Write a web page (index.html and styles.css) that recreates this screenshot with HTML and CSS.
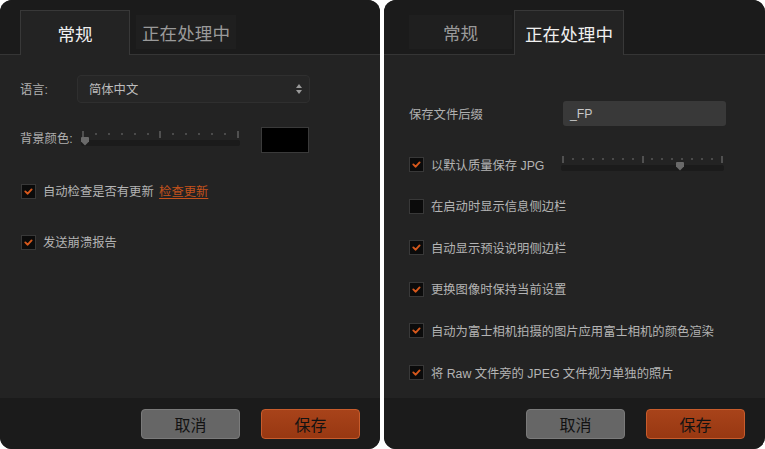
FILE: index.html
```html
<!DOCTYPE html>
<html lang="zh">
<head>
<meta charset="utf-8">
<title>偏好设置</title>
<link rel="stylesheet" href="styles.css">
</head>
<body>
<div class="panel left">
  <div class="tabs">
    <div class="tab active">常规</div>
    <div class="tab inactive">正在处理中</div>
  </div>
  <div class="content">
    <div class="row lang-row">
      <span class="label">语言:</span>
      <div class="select">简体中文<span class="arrows"><i class="up"></i><i class="down"></i></span></div>
    </div>
    <div class="row bg-row">
      <span class="label">背景颜色:</span>
      <div class="slider s13">
        <div class="ticks">
          <i class="big"></i><i></i><i></i><i></i><i></i><i></i><i class="big"></i><i></i><i></i><i></i><i></i><i></i><i class="big"></i>
        </div>
        <div class="track"><span class="thumb" style="left:0px"></span></div>
      </div>
      <div class="swatch"></div>
    </div>
    <div class="row check-row upd">
      <span class="cb on"><svg viewBox="0 0 15 15"><path d="M4.3 7.4 L6.7 9.7 L10.6 5.4"/></svg></span>
      <span class="text">自动检查是否有更新 <a class="link">检查更新</a></span>
    </div>
    <div class="row check-row crash">
      <span class="cb on"><svg viewBox="0 0 15 15"><path d="M4.3 7.4 L6.7 9.7 L10.6 5.4"/></svg></span>
      <span class="text">发送崩溃报告</span>
    </div>
  </div>
  <div class="footer">
    <button class="btn cancel">取消</button>
    <button class="btn save">保存</button>
  </div>
</div>

<div class="panel right">
  <div class="tabs">
    <div class="tab inactive">常规</div>
    <div class="tab active">正在处理中</div>
  </div>
  <div class="content">
    <div class="list">
      <div class="row suffix-row">
        <span class="label">保存文件后缀</span>
        <div class="input">_FP</div>
      </div>
      <div class="row check-row jpg">
        <div class="jpg-label">
          <span class="cb on"><svg viewBox="0 0 15 15"><path d="M4.3 7.4 L6.7 9.7 L10.6 5.4"/></svg></span>
          <span class="text">以默认质量保存 JPG</span>
        </div>
        <div class="slider s17">
          <div class="ticks">
            <i class="big"></i><i></i><i></i><i></i><i></i><i></i><i></i><i></i><i class="big"></i><i></i><i></i><i></i><i></i><i></i><i></i><i></i><i class="big"></i>
          </div>
          <div class="track"><span class="thumb" style="left:115px"></span></div>
        </div>
      </div>
      <div class="row check-row">
        <span class="cb"></span>
        <span class="text">在启动时显示信息侧边栏</span>
      </div>
      <div class="row check-row">
        <span class="cb on"><svg viewBox="0 0 15 15"><path d="M4.3 7.4 L6.7 9.7 L10.6 5.4"/></svg></span>
        <span class="text">自动显示预设说明侧边栏</span>
      </div>
      <div class="row check-row">
        <span class="cb on"><svg viewBox="0 0 15 15"><path d="M4.3 7.4 L6.7 9.7 L10.6 5.4"/></svg></span>
        <span class="text">更换图像时保持当前设置</span>
      </div>
      <div class="row check-row">
        <span class="cb on"><svg viewBox="0 0 15 15"><path d="M4.3 7.4 L6.7 9.7 L10.6 5.4"/></svg></span>
        <span class="text">自动为富士相机拍摄的图片应用富士相机的颜色渲染</span>
      </div>
      <div class="row check-row">
        <span class="cb on"><svg viewBox="0 0 15 15"><path d="M4.3 7.4 L6.7 9.7 L10.6 5.4"/></svg></span>
        <span class="text">将 Raw 文件旁的 JPEG 文件视为单独的照片</span>
      </div>
    </div>
  </div>
  <div class="footer">
    <button class="btn cancel">取消</button>
    <button class="btn save">保存</button>
  </div>
</div>
</body>
</html>
```

FILE: styles.css
```css
* { box-sizing: border-box; }

html, body {
  margin: 0;
  padding: 0;
  background: #ffffff;
}

body {
  display: flex;
  gap: 4px;
  width: 765px;
  height: 449px;
  font-family: "Liberation Sans", "Noto Sans CJK SC", sans-serif;
  font-size: 12.3px;
  color: #b4b4b4;
}

.panel {
  display: flex;
  flex-direction: column;
  height: 449px;
  border-radius: 12px;
  overflow: hidden;
  background: #232323;
}

.panel.left { width: 380px; }
.panel.right { width: 381px; }

/* Tabs header */
.tabs {
  display: flex;
  align-items: flex-end;
  height: 55px;
  flex: none;
  background: #1b1b1b;
  border-bottom: 1px solid #353535;
}

.panel.left .tabs { padding-left: 20px; }
.panel.right .tabs { padding-left: 25px; }

.tab {
  display: flex;
  align-items: center;
  justify-content: center;
  font-size: 17.6px;
  font-family: "Noto Sans CJK SC", sans-serif;
}

.tab.active {
  width: 110px;
  height: 45px;
  margin-bottom: -1px;
  background: #232323;
  border: 1px solid #383838;
  border-bottom: none;
  color: #f0f0f0;
  padding-top: 1px;
}

.tab.inactive {
  height: 34px;
  margin-bottom: 5px;
  background: #1f1f1f;
  color: #9a9a9a;
}

.panel.left .tab.inactive { width: 100px; margin-left: 6px; }
.panel.right .tab.inactive { width: 103px; margin-right: 2px; }

/* Content */
.content {
  flex: 1;
  display: flex;
  flex-direction: column;
  background: #232323;
}

.panel.left .content { padding: 20px 0 0 20px; }
.panel.right .content { padding: 46px 0 0 25px; }

.row {
  display: flex;
  align-items: center;
}

.label {
  color: #b0b0b0;
}

.lang-row { height: 28px; }
.lang-row .label { width: 57px; }

.select {
  position: relative;
  width: 233px;
  height: 28px;
  background: #262626;
  border: 1px solid #2f2f2f;
  border-radius: 4px;
  padding-left: 11px;
  display: flex;
  align-items: center;
  color: #bdbdbd;
}

.arrows {
  position: absolute;
  right: 7px;
  top: 8px;
  display: flex;
  flex-direction: column;
  gap: 2px;
}

.arrows i {
  display: block;
  width: 0;
  height: 0;
  border-left: 3px solid transparent;
  border-right: 3px solid transparent;
}
.arrows .up { border-bottom: 4px solid #9a9a9a; }
.arrows .down { border-top: 4px solid #9a9a9a; }

.bg-row {
  margin-top: 24px;
  height: 26px;
}
.bg-row .label { width: 61px; margin-top: -5px; }

.slider {
  position: relative;
  display: flex;
  flex-direction: column;
}

.slider.s13 { width: 159px; margin-top: -4px; }
.slider.s17 { width: 163px; }

.ticks {
  height: 7px;
  display: flex;
  justify-content: space-between;
  align-items: center;
  padding: 0 1px;
}

.ticks i {
  display: block;
  width: 2px;
  height: 2px;
  background: #4a4a4a;
}

.ticks i.big {
  height: 7px;
  background: #505050;
}

.track {
  position: relative;
  height: 6px;
  margin-top: 2px;
  background: #1b1b1b;
  border-radius: 2px;
}

.thumb {
  position: absolute;
  top: -3px;
  width: 8px;
  height: 9px;
  background: #6a6a6a;
  clip-path: polygon(0 0, 100% 0, 100% 55%, 50% 100%, 0 55%);
  border-radius: 1px;
}

.swatch {
  width: 48px;
  height: 26px;
  margin-left: 21px;
  background: #000000;
  border: 1px solid #3a3a3a;
}

.check-row { height: 16px; }
.check-row .text { margin-left: 7px; color: #b4b4b4; }

.panel.left .check-row { margin-left: 1px; }
.upd { margin-top: 30px; }
.crash { margin-top: 35px; }

.cb {
  flex: none;
  width: 15px;
  height: 15px;
  background: #0b0b0b;
  border: 1px solid #383838;
  display: flex;
  align-items: center;
  justify-content: center;
}

.cb svg {
  width: 15px;
  height: 15px;
  flex: none;
}

.cb svg path {
  fill: none;
  stroke: #d6581c;
  stroke-width: 1.9;
  stroke-linecap: round;
  stroke-linejoin: round;
}

.link {
  color: #c4521c;
  text-decoration: underline;
  text-underline-offset: 2px;
  margin-left: 2px;
}

/* Right panel list */
.list {
  display: flex;
  flex-direction: column;
  gap: 25.6px;
}

.suffix-row { height: 25px; margin-bottom: 5px; }
.suffix-row .label { width: 154px; }

.input {
  width: 163px;
  height: 25px;
  background: #393939;
  border-radius: 3px;
  display: flex;
  align-items: center;
  padding-left: 7px;
  color: #c8c8c8;
}

.jpg-label {
  display: flex;
  align-items: center;
  width: 152px;
}

.jpg .slider { margin-top: -3px; }

/* Footer */
.footer {
  flex: none;
  height: 51px;
  background: #1b1b1b;
  display: flex;
  justify-content: flex-end;
  align-items: flex-start;
  gap: 21px;
  padding: 11px 20px 0 0;
}

.btn {
  width: 99px;
  height: 30px;
  border-radius: 4px;
  font-family: "Noto Sans CJK SC", sans-serif;
  font-size: 16px;
  color: #121212;
  display: flex;
  align-items: center;
  justify-content: center;
  padding: 0;
}

.btn.cancel {
  background: #666666;
  border: 1px solid #7a7a7a;
}

.btn.save {
  background: linear-gradient(#a8431a, #983812);
  border: 1px solid #c85c2c;
}
```
